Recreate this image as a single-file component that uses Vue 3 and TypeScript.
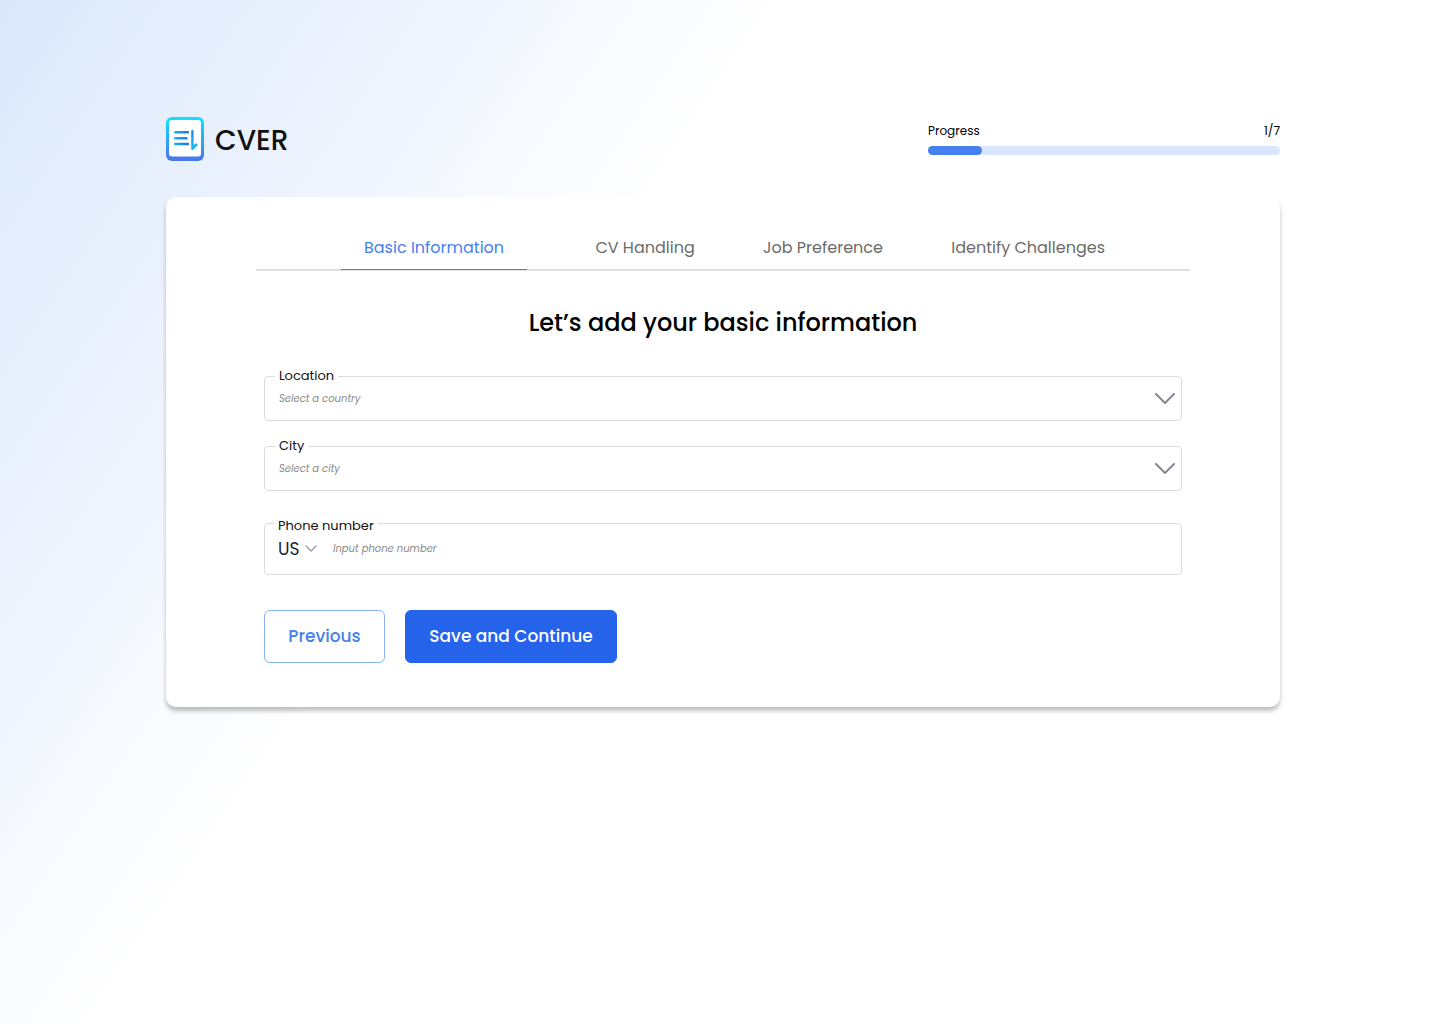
<script setup lang="ts">
import { ref } from 'vue'

interface Tab {
  label: string
  active: boolean
}

const tabs: Tab[] = [
  { label: 'Basic Information', active: true },
  { label: 'CV Handling', active: false },
  { label: 'Job Preference', active: false },
  { label: 'Identify Challenges', active: false },
]

const selects = [
  { id: 'location', label: 'Location', placeholder: 'Select a country' },
  { id: 'city', label: 'City', placeholder: 'Select a city' },
]

const step = 1
const totalSteps = 7
const progressPercent = 15.4
const phone = ref<string>('')
</script>

<template>
  <div class="page">
    <header class="header">
      <a class="brand" href="#">
        <svg class="logo" viewBox="0 0 38 44" width="38" height="44" fill="none" aria-hidden="true">
          <defs>
            <linearGradient id="frame" x1="0" y1="0" x2="0" y2="44" gradientUnits="userSpaceOnUse">
              <stop offset="0" stop-color="#0fe3fc" />
              <stop offset="1" stop-color="#4a74ea" />
            </linearGradient>
            <linearGradient id="lines" x1="8" y1="0" x2="24" y2="0" gradientUnits="userSpaceOnUse">
              <stop offset="0" stop-color="#12b5fb" />
              <stop offset="1" stop-color="#1f72e8" />
            </linearGradient>
            <linearGradient id="arrow" x1="0" y1="13" x2="0" y2="33" gradientUnits="userSpaceOnUse">
              <stop offset="0" stop-color="#2583f0" />
              <stop offset="1" stop-color="#0cc4fb" />
            </linearGradient>
          </defs>
          <rect width="38" height="44" rx="6" fill="url(#frame)" />
          <rect x="3" y="3" width="32" height="36.500" rx="3" fill="#fff" />
          <path d="M9.200 15.300h12.800M9.200 21.200h11.300M9.200 27h12.800" stroke="url(#lines)" stroke-width="2.400" stroke-linecap="round" />
          <path d="M26.400 14.200v17.600l4-4.200" stroke="url(#arrow)" stroke-width="2.400" stroke-linecap="round" stroke-linejoin="round" />
          <path d="M26.400 31.800v-4.500l3.800.5z" fill="#0cbdfb" />
        </svg>
        <span>CVER</span>
      </a>
      <div class="progress">
        <div class="progress-text">
          <span id="progress-label">Progress</span>
          <span>{{ step }}/{{ totalSteps }}</span>
        </div>
        <div
          class="track"
          role="progressbar"
          aria-labelledby="progress-label"
          :aria-valuenow="step"
          aria-valuemin="0"
          :aria-valuemax="totalSteps"
        >
          <div class="fill" :style="{ width: progressPercent + '%' }"></div>
        </div>
      </div>
    </header>

    <main class="card">
      <nav class="tabs">
        <a v-for="tab in tabs" :key="tab.label" href="#" class="tab" :class="{ active: tab.active }">{{ tab.label }}</a>
      </nav>

      <h1>Let’s add your basic information</h1>

      <form class="form" @submit.prevent>
        <div v-for="item in selects" :key="item.id" class="field">
          <label :for="item.id">{{ item.label }}</label>
          <select :id="item.id" class="choice">
            <option value="">{{ item.placeholder }}</option>
          </select>
          <svg class="chevron" viewBox="0 0 20 12" width="20" height="12" fill="none" aria-hidden="true">
            <path d="M1 1l9 9 9-9" stroke="#858994" stroke-width="2" stroke-linecap="round" stroke-linejoin="round" />
          </svg>
        </div>

        <div class="field phone">
          <label for="phone">Phone number</label>
          <div class="code">
            <select aria-label="Country code">
              <option>US</option>
            </select>
            <svg viewBox="0 0 12 8" width="12" height="8" fill="none" aria-hidden="true">
              <path d="M1 1l5 5 5-5" stroke="#9aa3b5" stroke-width="1.500" stroke-linecap="round" stroke-linejoin="round" />
            </svg>
          </div>
          <input id="phone" v-model="phone" type="tel" placeholder="Input phone number" />
        </div>

        <div class="actions">
          <button type="button" class="previous">Previous</button>
          <button type="submit" class="save">Save and Continue</button>
        </div>
      </form>
    </main>
  </div>
</template>

<style>
body {
  margin: 0;
}
</style>

<style scoped>
.page,
.page * {
  box-sizing: border-box;
}

.page {
  min-height: 100vh;
  padding: 117px 160px 64px 166px;
  font-family: Poppins, Inter, 'Open Sans', sans-serif;
  color: #000;
  background: linear-gradient(124deg, #dbe8fb 0%, #eff4fe 21%, #fff 37%);
}

.header {
  display: flex;
  justify-content: space-between;
  height: 44px;
}

.brand {
  display: flex;
  align-items: center;
  gap: 11px;
  color: #111;
  font-size: 28px;
  font-weight: 500;
  text-decoration: none;
}

.brand span {
  padding-top: 3px;
}

.progress {
  width: 352px;
  padding-top: 4px;
}

.progress-text {
  display: flex;
  justify-content: space-between;
  font-size: 12px;
  line-height: 20px;
}

.track {
  height: 9px;
  margin-top: 5px;
  border-radius: 5px;
  background: #dae6fc;
}

.fill {
  height: 100%;
  border-radius: 5px;
  background: #4680ee;
}

.card {
  margin-top: 36px;
  padding: 32px 90px 44px;
  border-radius: 10px;
  background: #fff;
  box-shadow: 0 4px 4px rgba(0, 0, 0, 0.25);
}

.tabs {
  display: flex;
  justify-content: space-between;
  height: 42px;
  padding: 0 85px;
  border-bottom: 2px solid #e0e0e0;
}

.tab {
  height: 41px;
  color: #6b6b6b;
  font-size: 16px;
  line-height: 38px;
  text-decoration: none;
  white-space: nowrap;
}

.tab.active {
  padding: 0 23px;
  border-bottom: 1px solid #4680ee;
  color: #4680ee;
}

h1 {
  margin: 36px 0 0;
  font-size: 24px;
  font-weight: 500;
  line-height: 32px;
  text-align: center;
}

.form {
  display: flex;
  flex-direction: column;
  gap: 25px;
  padding: 37px 8px 0;
}

.field {
  position: relative;
  display: flex;
  align-items: center;
  height: 45px;
  border: 1px solid #dcdcdc;
  border-radius: 4px;
}

.field label {
  position: absolute;
  top: -11px;
  left: 10px;
  padding: 0 4px;
  background: #fff;
  color: #111;
  font-size: 13px;
  line-height: 20px;
}

select,
input {
  appearance: none;
  border: 0;
  margin: 0;
  padding: 0;
  outline: none;
  background: transparent;
  font-family: inherit;
}

.choice,
input,
input::placeholder {
  color: #8a8a8a;
  font-size: 10px;
  font-style: italic;
  opacity: 1;
}

.choice {
  width: 100%;
  height: 100%;
  padding: 0 40px 0 14px;
}

.chevron {
  position: absolute;
  right: 6px;
  pointer-events: none;
}

.field.phone {
  height: 52px;
  margin-top: 7px;
  padding-left: 13px;
  gap: 16px;
}

.phone label {
  top: -8px;
  left: 9px;
}

.code {
  display: flex;
  align-items: center;
  gap: 5px;
}

.code select {
  color: #1b2133;
  font-size: 17px;
}

input {
  flex: 1;
  height: 100%;
}

.actions {
  display: flex;
  gap: 20px;
  margin-top: 10px;
}

button {
  height: 53px;
  padding: 0 0 1px;
  border: 1px solid #2563eb;
  border-radius: 6px;
  font-family: inherit;
  font-size: 17px;
  font-weight: 500;
}

.previous {
  width: 121px;
  border-color: #8ab0f6;
  background: #fff;
  color: #4680ee;
}

.save {
  width: 212px;
  background: #2563eb;
  color: #fff;
}
</style>
